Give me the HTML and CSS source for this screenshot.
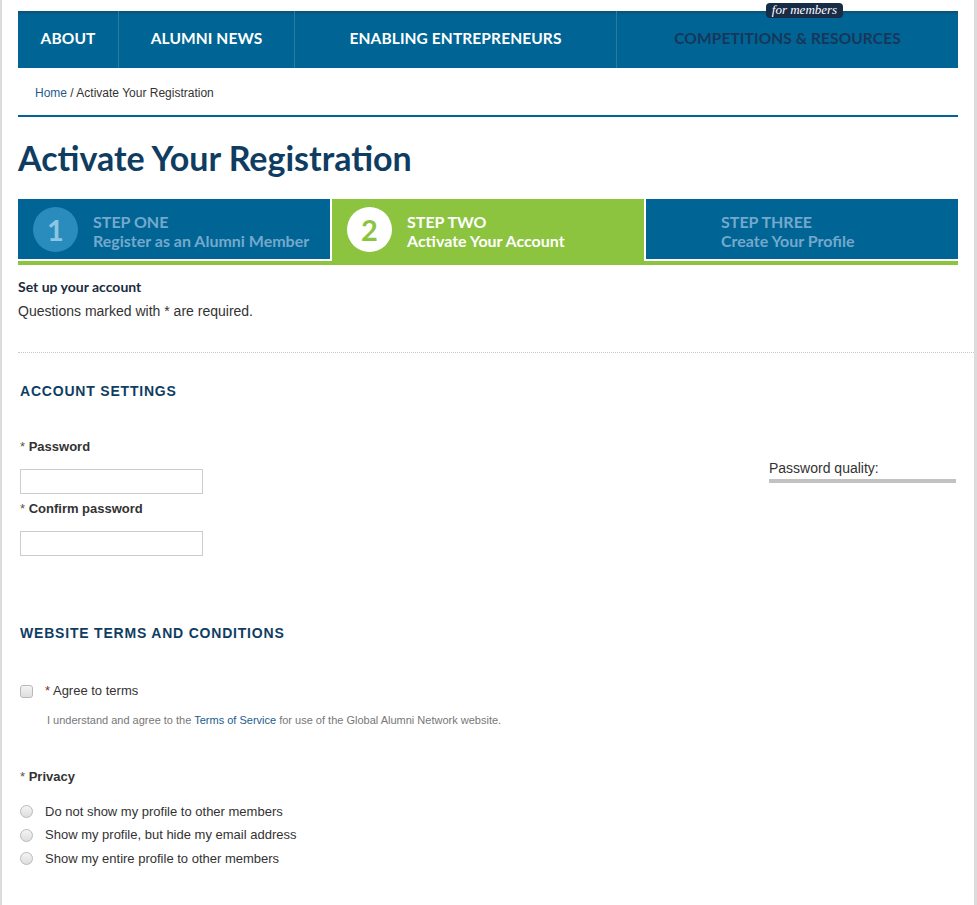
FILE: index.html
```html
<!DOCTYPE html>
<html>
<head>
	<meta charset="UTF-8">
	<title>Activate Your Registration</title>
	<link rel="stylesheet" href="styles.css">
</head>
<body>
	<div class="page">
		<ul class="nav">
			<li class="nav-about"><a href="javascript:;">ABOUT</a></li>
			<li class="nav-news"><a href="javascript:;">ALUMNI NEWS</a></li>
			<li class="nav-enable"><a href="javascript:;">ENABLING ENTREPRENEURS</a></li>
			<li class="nav-comp">
				<span class="badge">for members</span>
				<a href="javascript:;">COMPETITIONS &amp; RESOURCES</a>
			</li>
		</ul>
		<div class="crumbs"><a href="javascript:;">Home</a> / Activate Your Registration</div>

		<h1 class="title">Activate Your Registration</h1>

		<div class="steps">
			<div class="step step-one">
				<span class="num">1</span>
				<div class="step-text">STEP ONE<br>Register as an Alumni Member</div>
			</div>
			<div class="step step-two on">
				<span class="num">2</span>
				<div class="step-text">STEP TWO<br>Activate Your Account</div>
			</div>
			<div class="step step-three">
				<span class="num blank"></span>
				<div class="step-text">STEP THREE<br>Create Your Profile</div>
			</div>
		</div>

		<p class="intro-head">Set up your account</p>
		<p class="intro">Questions marked with * are required.</p>
		<div class="dots"></div>

		<div class="form">
			<h2 class="sec">ACCOUNT SETTINGS</h2>
			<div class="pass-row">
				<div class="pass-fields">
					<label class="lbl"><span class="req">*</span> Password</label>
					<input type="password" class="txt">
					<label class="lbl lbl-confirm"><span class="req">*</span> Confirm password</label>
					<input type="password" class="txt">
				</div>
				<div class="quality">
					<div class="quality-label">Password quality:</div>
					<div class="quality-bar"></div>
				</div>
			</div>

			<h2 class="sec sec-terms">WEBSITE TERMS AND CONDITIONS</h2>
			<div class="check-row">
				<input type="checkbox" id="agree">
				<label for="agree"><span class="req red">*</span> Agree to terms</label>
			</div>
			<p class="desc">I understand and agree to the <a href="javascript:;">Terms of Service</a> for use of the Global Alumni Network website.</p>

			<label class="lbl lbl-privacy"><span class="req">*</span> Privacy</label>
			<div class="radios">
				<div class="radio-row"><input type="radio" name="privacy" id="p1"><label for="p1">Do not show my profile to other members</label></div>
				<div class="radio-row"><input type="radio" name="privacy" id="p2"><label for="p2">Show my profile, but hide my email address</label></div>
				<div class="radio-row"><input type="radio" name="privacy" id="p3"><label for="p3">Show my entire profile to other members</label></div>
			</div>
		</div>
	</div>
</body>
</html>
```
FILE: styles.css
```css
*{margin: 0;padding: 0;box-sizing: border-box;}
body{font-family: "Liberation Sans", Arial, sans-serif;color: #333;background: #fff;}
a{text-decoration: none;}
.page{width: 977px;min-height: 905px;border-left: 2px solid #dcdcdc;border-right: 3px solid #dcdcdc;padding: 11px 16px 0 16px;}

/* top nav */
.nav{list-style: none;display: flex;height: 57px;background: linear-gradient(#0b4f78 0, #006594 4px, #006594 100%);}
.nav li{position: relative;display: flex;align-items: center;justify-content: center;border-left: 1px solid #2b7aa6;padding-bottom: 3px;}
.nav li:first-child{border-left: none;}
.nav a{font-family: "Lato", sans-serif;font-weight: 700;font-size: 15.5px;color: #fff;letter-spacing: 0.1px;}
.nav-about{width: 100px;}
.nav-news{width: 176px;}
.nav-enable{width: 322px;}
.nav-comp{flex: 1;}
.nav-comp a{color: #17375a;}
.badge{position: absolute;top: -8px;left: 149px;width: 77px;height: 15px;background: #182b47;border-radius: 4px;color: #fff;
	font-family: "Liberation Serif", serif;font-style: italic;font-size: 13px;line-height: 14px;text-align: center;}

.crumbs{height: 49px;line-height: 47px;padding: 2px 0 0 17px;font-size: 12px;color: #333;border-bottom: 2px solid #006594;}
.crumbs a{color: #245b8c;}

.title{font-family: "Lato", sans-serif;font-weight: 700;font-size: 34px;line-height: 40px;color: #0f3d62;margin: 21px 0 21px;}

/* steps */
.steps{display: flex;border-bottom: 4px solid #8cc43f;}
.step{flex: 1;height: 62px;background: #006594;border-bottom: 2px solid #fff;display: flex;align-items: center;padding-left: 15px;}
.step-one{border-right: 2px solid #fff;}
.step-three{border-left: 2px solid #fff;}
.step.on{background: #8cc43f;border-bottom: none;padding-bottom: 2px;}
.num{width: 45px;height: 45px;border-radius: 50%;background: #2a8bbd;color: #8cc6e3;font-family: "Lato", sans-serif;font-weight: 700;font-size: 29px;
	line-height: 45px;text-align: center;margin-right: 15px;flex: none;}
.num.blank{background: none;}
.on .num{background: #fff;color: #8cc43f;}
.step-text{font-family: "Lato", sans-serif;font-weight: 700;font-size: 16px;line-height: 19px;color: #74a9cd;padding-top: 4px;}
.on .step-text{color: #fff;}

.intro-head{font-family: "Lato", sans-serif;font-weight: 700;font-size: 14px;line-height: 20px;color: #1c2c40;margin-top: 12px;}
.intro{font-size: 14px;line-height: 20px;margin-top: 4px;}
.dots{border-top: 1px dotted #c8c8c8;margin: 31px -16px 0 0;}

/* form */
.form{padding-left: 2px;}
.sec{font-size: 14px;line-height: 20px;letter-spacing: 0.8px;color: #0f3d62;font-weight: bold;margin-top: 28px;}
.sec-terms{margin-top: 67px;}
.lbl{display: block;font-size: 13px;line-height: 20px;font-weight: bold;color: #333;}
.req{font-weight: normal;color: #555;}
.req.red{color: #8a2a2a;}
.pass-row{display: flex;justify-content: space-between;margin-top: 36px;}
.txt{display: block;width: 183px;height: 25px;border: 1px solid #ccc;margin-top: 12px;}
.lbl-confirm{margin-top: 5px;}
.quality{width: 187px;margin: 21px 2px 0 0;}
.quality-label{font-size: 14px;line-height: 20px;}
.quality-bar{height: 4px;background: #c2c2c2;margin-top: 1px;}

.check-row{display: flex;align-items: center;margin-top: 38px;font-size: 13px;line-height: 20px;}
.check-row input, .radio-row input{-webkit-appearance: none;appearance: none;width: 13px;height: 13px;margin: 0 12px 0 0;flex: none;
	border: 1px solid #b9b9b9;background: linear-gradient(#f4f4f4, #dedede);}
.check-row input{border-radius: 3px;}
.radio-row input{border-radius: 50%;}
.desc{font-size: 11px;line-height: 16px;color: #777;margin: 11px 0 0 27px;}
.desc a{color: #245b8c;}
.lbl-privacy{margin-top: 39px;}
.radios{margin-top: 13px;}
.radio-row{display: flex;align-items: center;font-size: 13px;line-height: 20px;height: 23.5px;}
```
